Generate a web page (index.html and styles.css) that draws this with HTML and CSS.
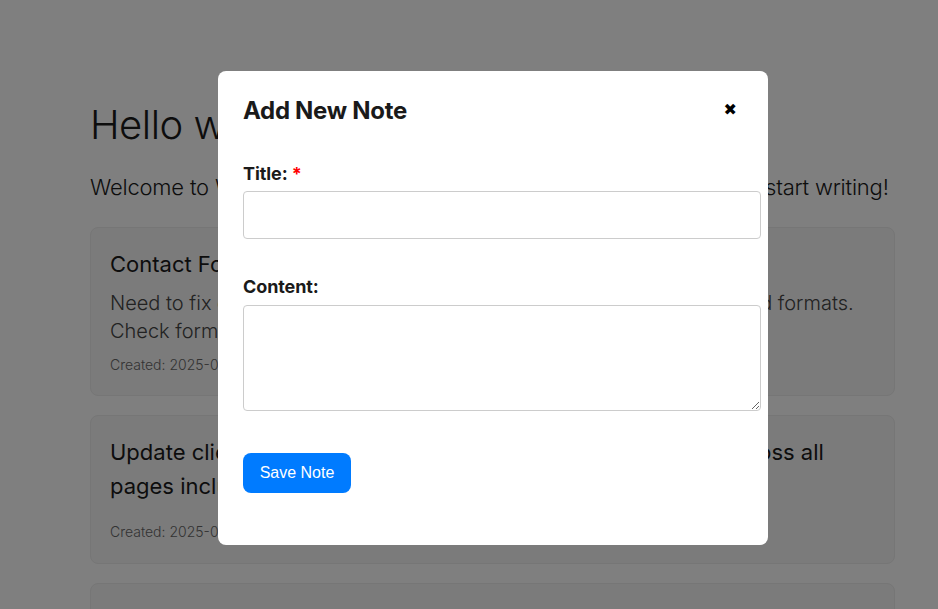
FILE: index.html
```html
<!DOCTYPE html>
<html lang="en">
<head>
<meta charset="utf-8">
<title>Notes</title>
<link rel="stylesheet" href="styles.css">
</head>
<body>
<main class="page">
  <h1 class="hello">Hello world</h1>
  <p class="welcome">Welcome to WriteSpace! Click the &ldquo;Add New Note&rdquo; button above to start writing!</p>
  <section class="notes">
    <article class="card">
      <h2 class="card-title">Contact Form Validation</h2>
      <p class="card-body">Need to fix email validation on the contact form for phone numbers and formats. Check form-validation.js</p>
      <p class="card-meta">Created: 2025-01-14</p>
    </article>
    <article class="card">
      <h2 class="card-title">Update client website header with the new logo and colors across all pages including blog.</h2>
      <p class="card-meta card-meta-gap">Created: 2025-01-12</p>
    </article>
    <article class="card">
      <h2 class="card-title">Meeting notes</h2>
    </article>
  </section>
</main>

<div class="overlay">
  <div class="modal">
    <div class="modal-head">
      <h2 class="modal-title">Add New Note</h2>
      <button class="close" type="button" aria-label="Close">&#x2716;</button>
    </div>
    <form class="form">
      <label class="label" for="title">Title: <span class="req">*</span></label>
      <input class="input" id="title" type="text">
      <label class="label label-gap" for="content">Content:</label>
      <textarea class="textarea" id="content"></textarea>
      <button class="save" type="button">Save Note</button>
    </form>
  </div>
</div>
</body>
</html>
```
FILE: styles.css
```css
html, body {
  margin: 0;
  padding: 0;
  height: 100%;
  overflow: hidden;
}
body {
  font-family: Inter, "Noto Sans", sans-serif;
  background: #ffffff;
  color: #1a1a1a;
}
.page {
  width: 805px;
  margin-left: 90px;
  padding-top: 101px;
}
.hello {
  margin: 0;
  font-size: 40px;
  line-height: 48px;
  font-weight: 300;
  letter-spacing: -0.5px;
}
.welcome {
  margin: 23px 0 0;
  font-size: 22px;
  line-height: 30px;
  font-weight: 300;
  letter-spacing: -0.2px;
  white-space: nowrap;
}
.notes {
  margin-top: 25px;
  display: flex;
  flex-direction: column;
  gap: 19px;
}
.card {
  background: #f6f6f6;
  border: 1px solid #ececec;
  border-radius: 8px;
  padding: 19px 19px 20px;
}
.card-title {
  margin: 0;
  font-size: 22px;
  line-height: 34px;
  font-weight: 400;
  letter-spacing: 0;
}
.card-body {
  margin: 8px 0 0;
  font-size: 20px;
  line-height: 28px;
  font-weight: 300;
  color: #444;
  letter-spacing: 0;
}
.card-meta {
  margin: 10px 0 0;
  font-size: 14px;
  line-height: 20px;
  color: #666;
  font-weight: 300;
}
.card-meta-gap {
  margin-top: 19px;
  margin-bottom: 1px;
}

.overlay {
  position: fixed;
  inset: 0;
  background: rgba(0, 0, 0, 0.5);
}
.modal {
  position: absolute;
  left: 218px;
  top: 71px;
  width: 500px;
  height: 424px;
  padding: 25px;
  background: #fff;
  border-radius: 8px;
}
.modal-head {
  display: flex;
  align-items: center;
  justify-content: space-between;
  height: 28px;
}
.modal-title {
  margin: 0;
  font-size: 24px;
  font-weight: 700;
  letter-spacing: -0.3px;
  color: #1a1a1a;
}
.close {
  border: 0;
  background: none;
  padding: 0;
  font-size: 16px;
  line-height: 16px;
  color: #000;
  margin-right: 6px;
  font-family: "DejaVu Sans", sans-serif;
  cursor: pointer;
}
.form {
  display: flex;
  flex-direction: column;
  align-items: flex-start;
  margin-top: 38px;
}
.label {
  font-size: 18px;
  line-height: 24px;
  font-weight: 700;
  color: #1a1a1a;
  letter-spacing: -0.1px;
}
.req {
  color: #ff0000;
}
.input {
  margin-top: 5px;
  width: 500px;
  height: 30px;
  padding: 8px;
  border: 1px solid #cccccc;
  border-radius: 4px;
  font-size: 16px;
}
.label-gap {
  margin-top: 36px;
}
.textarea {
  margin-top: 6px;
  width: 500px;
  height: 88px;
  padding: 8px;
  border: 1px solid #cccccc;
  border-radius: 4px;
  font-size: 16px;
  resize: vertical;
  font-family: inherit;
}
.save {
  margin-top: 42px;
  width: 108px;
  height: 40px;
  border: 0;
  border-radius: 8px;
  background: #007bff;
  color: #fff;
  font-family: "Liberation Sans", Arial, sans-serif;
  font-size: 16px;
  padding: 0;
}
```
